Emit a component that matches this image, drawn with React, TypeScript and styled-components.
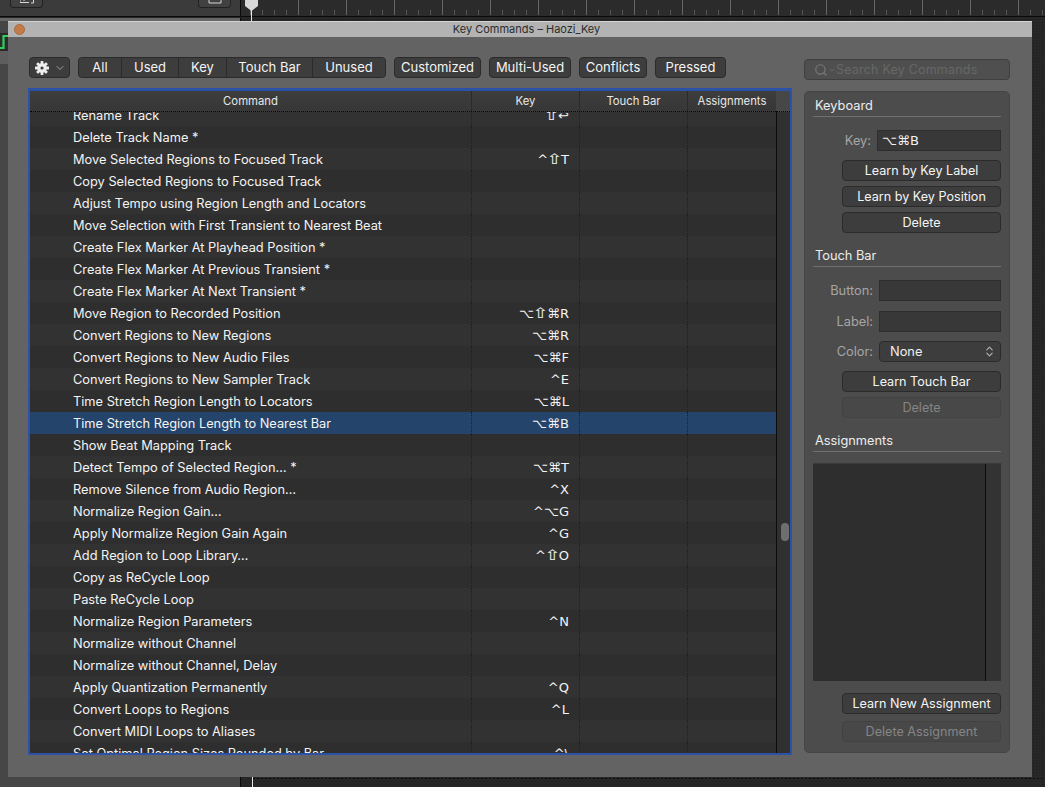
import React from 'react';
import styled, {createGlobalStyle} from 'styled-components';
import {ChevronDown, ChevronsUpDown, Search} from 'lucide-react';

interface ICommandRow {
    label: string;
    shortcut?: string;
    selected?: boolean;
}

const COMMANDS: ICommandRow[] = [
    {label: 'Rename Track', shortcut: '⇧↩'},
    {label: 'Delete Track Name *'},
    {label: 'Move Selected Regions to Focused Track', shortcut: '^⇧T'},
    {label: 'Copy Selected Regions to Focused Track'},
    {label: 'Adjust Tempo using Region Length and Locators'},
    {label: 'Move Selection with First Transient to Nearest Beat'},
    {label: 'Create Flex Marker At Playhead Position *'},
    {label: 'Create Flex Marker At Previous Transient *'},
    {label: 'Create Flex Marker At Next Transient *'},
    {label: 'Move Region to Recorded Position', shortcut: '⌥⇧⌘R'},
    {label: 'Convert Regions to New Regions', shortcut: '⌥⌘R'},
    {label: 'Convert Regions to New Audio Files', shortcut: '⌥⌘F'},
    {label: 'Convert Regions to New Sampler Track', shortcut: '^E'},
    {label: 'Time Stretch Region Length to Locators', shortcut: '⌥⌘L'},
    {label: 'Time Stretch Region Length to Nearest Bar', shortcut: '⌥⌘B', selected: true},
    {label: 'Show Beat Mapping Track'},
    {label: 'Detect Tempo of Selected Region… *', shortcut: '⌥⌘T'},
    {label: 'Remove Silence from Audio Region…', shortcut: '^X'},
    {label: 'Normalize Region Gain…', shortcut: '^⌥G'},
    {label: 'Apply Normalize Region Gain Again', shortcut: '^G'},
    {label: 'Add Region to Loop Library…', shortcut: '^⇧O'},
    {label: 'Copy as ReCycle Loop'},
    {label: 'Paste ReCycle Loop'},
    {label: 'Normalize Region Parameters', shortcut: '^N'},
    {label: 'Normalize without Channel'},
    {label: 'Normalize without Channel, Delay'},
    {label: 'Apply Quantization Permanently', shortcut: '^Q'},
    {label: 'Convert Loops to Regions', shortcut: '^L'},
    {label: 'Convert MIDI Loops to Aliases'},
    {label: 'Set Optimal Region Sizes Rounded by Bar', shortcut: '^\\'},
];

const SEGMENTS = [
    {label: 'All', width: 42},
    {label: 'Used', width: 57},
    {label: 'Key', width: 48},
    {label: 'Touch Bar', width: 86},
    {label: 'Unused', width: 73},
];

const FILTERS = [
    {label: 'Customized', width: 87},
    {label: 'Multi-Used', width: 82},
    {label: 'Conflicts', width: 68},
    {label: 'Pressed', width: 71},
];

const GlobalStyle = createGlobalStyle`
    html, body {
        margin: 0;
        background: #262626;
    }
    * {
        box-sizing: border-box;
    }
    body {
        font-family: Inter, "Noto Sans", sans-serif;
    }
`;

const Desktop = styled.div`
    position: relative;
    width: 1045px;
    height: 787px;
    overflow: hidden;
    background-color: #272727;
    background-image: radial-gradient(#1f1f1f 0.7px, transparent 0.8px);
    background-size: 3px 3px;
`;

const HostTop = styled.div`
    display: grid;
    grid-template-columns: 241px 1fr;
    height: 17px;
    border-bottom: 1px solid #0a0a0a;
`;

const HostToolbar = styled.div`
    display: flex;
    justify-content: space-between;
    padding: 0 9px 0 10px;
    background: #3b3b3b;
    border-right: 1px solid #0a0a0a;
`;

const HostButton = styled.div`
    width: 33px;
    height: 8px;
    display: flex;
    justify-content: center;
    background: #414141;
    border: 1px solid #222;
    border-top: 0;
    border-radius: 0 0 4px 4px;
`;

const Ruler = styled.div`
    position: relative;
    background-color: #2b2b2b;
    background-image:
        repeating-linear-gradient(90deg, transparent 0 9px, #666 9px 10px, transparent 10px 48px),
        repeating-linear-gradient(90deg, transparent 0 9px, #555 9px 10px, transparent 10px 12px);
    background-size: 100% 15px, 100% 5px;
    background-position: 0 0, 0 10px;
    background-repeat: no-repeat;
`;

const Playhead = styled.div`
    position: absolute;
    left: 4px;
    top: 0;
    width: 13px;
    height: 11px;
    background: #d8d8d8;
    clip-path: polygon(0 0, 100% 0, 100% 55%, 50% 100%, 0 55%);
`;

const PlayheadLine = styled.div`
    position: absolute;
    left: 10px;
    top: 10px;
    width: 1px;
    height: 11px;
    background: #e8e8e8;
`;

const HostGutter = styled.div`
    position: absolute;
    left: 0;
    top: 18px;
    width: 241px;
    height: 769px;
    background: linear-gradient(
        #666 0 3px,
        #454545 3px 15px,
        #2b2b2b 15px 33px,
        #5e5e5e 33px 46px,
        #464646 46px
    );
    border-right: 1px solid #0a0a0a;
`;

const HostTrackMark = styled.svg`
    position: absolute;
    left: 0;
    top: 33px;
`;

const HostFoot = styled.div`
    position: absolute;
    left: 241px;
    top: 777px;
    width: 804px;
    height: 10px;
    background-image: radial-gradient(#0c0c0c 0.8px, transparent 0.9px);
    background-size: 4px 3px;
    background-position: 11px 0;
    background-repeat: repeat-x;
`;

const HostPlayLine = styled.div`
    width: 12px;
    height: 10px;
    background: #262626;
    border-right: 1px solid #e8e8e8;
`;

const Window = styled.div`
    position: absolute;
    left: 8px;
    top: 21px;
    width: 1024px;
    height: 756px;
    display: flex;
    flex-direction: column;
    background: #636363;
`;

const TitleBar = styled.div`
    position: relative;
    height: 16px;
    flex: none;
    padding-left: 13px;
    text-align: center;
    font-size: 11px;
    line-height: 15px;
    color: #2c2c2c;
    background-color: #b3b3b3;
    background-image: radial-gradient(#a8a8a8 0.6px, transparent 0.7px);
    background-size: 2px 2px;
    border-top: 1px solid #d4d4d4;
`;

const CloseDot = styled.span`
    position: absolute;
    left: 6px;
    top: 2px;
    width: 11px;
    height: 11px;
    border-radius: 50%;
    background: #c27c4a;
    border: 1px solid #a96a3d;
`;

const Content = styled.div`
    flex: 1;
    min-height: 0;
    display: grid;
    grid-template-columns: 764px 206px;
    column-gap: 12px;
    grid-template-rows: 21px 1fr;
    padding: 20px 0 22px 20px;
    row-gap: 10px;
`;

const Toolbar = styled.div`
    display: flex;
    gap: 8px;
    margin-left: 1px;
`;

const ChromeButton = styled.div<{$width: number}>`
    width: ${props => props.$width}px;
    height: 21px;
    display: flex;
    align-items: center;
    justify-content: center;
    font-size: 13px;
    line-height: 19px;
    color: #f4f4f4;
    background: #3d3d3d;
    border: 1px solid #2b2b2b;
    border-radius: 4px;
`;

const GearButton = styled(ChromeButton)`
    gap: 5px;
    padding-left: 2px;
    color: #ededed;
    svg + svg {
        color: #a0a0a0;
    }
`;

const SegmentGroup = styled.div`
    display: flex;
    height: 21px;
    background: #3d3d3d;
    border: 1px solid #2b2b2b;
    border-radius: 4px;
`;

const Segment = styled.div<{$width: number}>`
    width: ${props => props.$width}px;
    display: flex;
    align-items: center;
    justify-content: center;
    font-size: 13px;
    line-height: 19px;
    color: #f4f4f4;
    & + & {
        border-left: 1px solid #2b2b2b;
    }
`;

const SearchBox = styled.div`
    height: 21px;
    margin-top: 2px;
    display: flex;
    align-items: center;
    padding-left: 9px;
    font-size: 12.5px;
    letter-spacing: 0.2px;
    color: #676767;
    background: #4f4f4f;
    border: 1px solid #3f3f3f;
    border-radius: 4px;
    svg {
        flex: none;
        color: #787878;
    }
`;

const Table = styled.div`
    position: relative;
    display: grid;
    grid-template-columns: 1fr 14px;
    grid-template-rows: 21px 1fr;
    height: 667px;
    overflow: hidden;
    background: #2f2f2f;
    border: 2px solid #2c52a8;
    border-top-width: 3px;
`;

const TableHeader = styled.div`
    display: grid;
    grid-template-columns: 441px 108px 108px 89px;
    height: 21px;
    background: linear-gradient(#3d3d3d, #373737);
    border-bottom: 1px dotted #050505;
`;

const HeaderCell = styled.div`
    display: flex;
    align-items: center;
    justify-content: center;
    font-size: 11.3px;
    white-space: nowrap;
    color: #e8e8e8;
    & + & {
        border-left: 1px solid #2b2b2b;
    }
`;

const HeaderCorner = styled.div`
    background: #474747;
    border-bottom: 1px dotted #050505;
`;

const RowsViewport = styled.div`
    min-height: 0;
    overflow: hidden;
`;

const RowsList = styled.div`
    margin-top: -8px;
`;

const Row = styled.div<{$selected?: boolean}>`
    display: grid;
    grid-template-columns: 441px 108px 108px 89px;
    height: 22px;
    font-size: 12.8px;
    line-height: 24px;
    color: #f4f4f4;
    background: ${props => (props.$selected ? '#24446b' : '#2e2e2e')};
    &:nth-child(odd) {
        background: ${props => (props.$selected ? '#24446b' : '#323232')};
    }
`;

const CommandCell = styled.div`
    padding-left: 43px;
    white-space: nowrap;
`;

const DataCell = styled.div`
    border-left: 1px dotted #202020;
`;

const KeyCell = styled(DataCell)`
    padding-right: 10px;
    text-align: right;
    white-space: nowrap;
    font-family: "DejaVu Sans", Inter, sans-serif;
    font-size: 13px;
`;

const ShiftGlyph = styled.span`
    display: inline-block;
    margin: 0 1px;
    line-height: 1;
    transform: scale(1.5, 1.1);
`;

const ScrollTrack = styled.div`
    position: relative;
    background: #303030;
    border-left: 1px solid #0c0c0c;
`;

const ScrollThumb = styled.div`
    position: absolute;
    left: 4px;
    top: 411px;
    width: 8px;
    height: 18px;
    border-radius: 4px;
    background: #6e6e6e;
`;

const SidePanel = styled.aside`
    display: flex;
    flex-direction: column;
    height: 662px;
    margin-top: 3px;
    padding: 4px 8px 10px;
    background: #4c4c4c;
    border: 1px solid #454545;
    border-radius: 5px;
`;

const SectionTitle = styled.div`
    height: 21px;
    padding-left: 2px;
    font-size: 12.8px;
    line-height: 20px;
    color: #ececec;
    border-bottom: 1px solid #6f6f6f;
`;

const FieldRow = styled.div<{$field: number; $after: number}>`
    display: grid;
    grid-template-columns: 1fr ${props => props.$field}px;
    column-gap: 6px;
    align-items: center;
    height: 21px;
    margin-bottom: ${props => props.$after}px;
`;

const FieldLabel = styled.div`
    text-align: right;
    font-size: 12.8px;
    color: #a6a6a6;
`;

const FieldInput = styled.div`
    height: 21px;
    padding-left: 4px;
    font-family: "DejaVu Sans", Inter, sans-serif;
    font-size: 13px;
    line-height: 20px;
    color: #f0f0f0;
    background: #383838;
    border: 1px solid #2e2e2e;
`;

const SelectBox = styled.div`
    height: 21px;
    display: flex;
    align-items: center;
    justify-content: space-between;
    padding: 0 4px 0 10px;
    font-size: 12.8px;
    color: #f0f0f0;
    background: #3d3d3d;
    border: 1px solid #2b2b2b;
    border-radius: 4px;
    svg {
        color: #b5b5b5;
    }
`;

const ActionButton = styled.div<{$disabled?: boolean}>`
    flex: none;
    width: 159px;
    height: 21px;
    margin-left: auto;
    display: flex;
    align-items: center;
    justify-content: center;
    font-size: 12.6px;
    color: ${props => (props.$disabled ? '#858585' : '#f4f4f4')};
    background: ${props => (props.$disabled ? '#484848' : '#3d3d3d')};
    border: 1px solid ${props => (props.$disabled ? '#424242' : '#2b2b2b')};
    border-radius: 4px;
`;

const ButtonStack = styled.div<{$gap: number}>`
    display: flex;
    flex-direction: column;
    gap: ${props => props.$gap}px;
`;

const FieldGroup = styled.div`
    padding-top: 13px;
`;

const PanelSection = styled.div`
    margin-top: 13px;
`;

const AssignmentsSection = styled(PanelSection)`
    display: flex;
    flex-direction: column;
    flex: 1;
    min-height: 0;
`;

const AssignmentsList = styled.div`
    display: grid;
    grid-template-columns: 1fr 16px;
    height: 218px;
    margin: 11px 0 12px;
    background: #2e2e2e;
    border-top: 1px solid #3a3a3a;
`;

const AssignmentsScroll = styled.div`
    background: #333;
    border-left: 1px solid #0c0c0c;
`;

const GearIcon = (): JSX.Element => (
    <svg width="14" height="14" viewBox="0 0 14 14">
        <g fill="currentColor">
            {[0, 45, 90, 135, 180, 225, 270, 315].map(angle => (
                <rect key={angle} x="5.6" y="0" width="2.8" height="4" rx="0.5" transform={`rotate(${angle} 7 7)`} />
            ))}
            <path
                fillRule="evenodd"
                d="M7 2.2a4.8 4.8 0 1 1 0 9.6 4.8 4.8 0 0 1 0-9.6zM7 5.4a1.6 1.6 0 1 0 0 3.2 1.6 1.6 0 0 0 0-3.2z"
            />
        </g>
    </svg>
);

const HostStackIcon = (): JSX.Element => (
    <svg width="14" height="4" viewBox="0 0 14 4">
        <path d="M0 0 V2.5 H9 M4 0 V1 M13.5 0 V3 H11" fill="none" stroke="#d8d8d8" strokeWidth="1" />
    </svg>
);

const HostSquareIcon = (): JSX.Element => (
    <svg width="14" height="4" viewBox="0 0 14 4">
        <path d="M1 0 V3 H13 V0" fill="none" stroke="#d8d8d8" strokeWidth="1" />
    </svg>
);

const renderShortcut = (shortcut?: string) =>
    shortcut
        ?.split('')
        .map((char, index) => (char === '⇧' ? <ShiftGlyph key={index}>{char}</ShiftGlyph> : char));

const App = (): JSX.Element => {
    return (
        <Desktop>
            <GlobalStyle />
            <HostGutter />
            <HostTrackMark width="8" height="17" viewBox="0 0 8 17">
                <path d="M0 15 H3.5 V3 H8" fill="none" stroke="#2fd05a" strokeWidth="2.2" />
            </HostTrackMark>
            <HostTop>
                <HostToolbar>
                    <HostButton>
                        <HostStackIcon />
                    </HostButton>
                    <HostButton>
                        <HostSquareIcon />
                    </HostButton>
                </HostToolbar>
                <Ruler>
                    <Playhead />
                    <PlayheadLine />
                </Ruler>
            </HostTop>
            <HostFoot>
                <HostPlayLine />
            </HostFoot>
            <Window>
                <TitleBar>
                    <CloseDot />
                    Key Commands – Haozi_Key
                </TitleBar>
                <Content>
                    <Toolbar>
                        <GearButton $width={41}>
                            <GearIcon />
                            <ChevronDown size={12} />
                        </GearButton>
                        <SegmentGroup>
                            {SEGMENTS.map(segment => (
                                <Segment key={segment.label} $width={segment.width}>
                                    {segment.label}
                                </Segment>
                            ))}
                        </SegmentGroup>
                        {FILTERS.map(filter => (
                            <ChromeButton key={filter.label} $width={filter.width}>
                                {filter.label}
                            </ChromeButton>
                        ))}
                    </Toolbar>
                    <SearchBox>
                        <Search size={14} />
                        <ChevronDown size={8} />
                        Search Key Commands
                    </SearchBox>
                    <Table>
                        <TableHeader>
                            <HeaderCell>Command</HeaderCell>
                            <HeaderCell>Key</HeaderCell>
                            <HeaderCell>Touch Bar</HeaderCell>
                            <HeaderCell>Assignments</HeaderCell>
                        </TableHeader>
                        <HeaderCorner />
                        <RowsViewport>
                            <RowsList>
                                {COMMANDS.map(command => (
                                    <Row key={command.label} $selected={command.selected}>
                                        <CommandCell>{command.label}</CommandCell>
                                        <KeyCell>{renderShortcut(command.shortcut)}</KeyCell>
                                        <DataCell />
                                        <DataCell />
                                    </Row>
                                ))}
                            </RowsList>
                        </RowsViewport>
                        <ScrollTrack>
                            <ScrollThumb />
                        </ScrollTrack>
                    </Table>
                    <SidePanel>
                        <SectionTitle>Keyboard</SectionTitle>
                        <FieldGroup>
                            <FieldRow $field={124} $after={9}>
                                <FieldLabel>Key:</FieldLabel>
                                <FieldInput>⌥⌘B</FieldInput>
                            </FieldRow>
                            <ButtonStack $gap={5}>
                                <ActionButton>Learn by Key Label</ActionButton>
                                <ActionButton>Learn by Key Position</ActionButton>
                                <ActionButton>Delete</ActionButton>
                            </ButtonStack>
                        </FieldGroup>
                        <PanelSection>
                            <SectionTitle>Touch Bar</SectionTitle>
                            <FieldGroup>
                                <FieldRow $field={122} $after={10}>
                                    <FieldLabel>Button:</FieldLabel>
                                    <FieldInput />
                                </FieldRow>
                                <FieldRow $field={122} $after={9}>
                                    <FieldLabel>Label:</FieldLabel>
                                    <FieldInput />
                                </FieldRow>
                                <FieldRow $field={122} $after={9}>
                                    <FieldLabel>Color:</FieldLabel>
                                    <SelectBox>
                                        None
                                        <ChevronsUpDown size={13} />
                                    </SelectBox>
                                </FieldRow>
                                <ButtonStack $gap={5}>
                                    <ActionButton>Learn Touch Bar</ActionButton>
                                    <ActionButton $disabled>Delete</ActionButton>
                                </ButtonStack>
                            </FieldGroup>
                        </PanelSection>
                        <AssignmentsSection>
                            <SectionTitle>Assignments</SectionTitle>
                            <AssignmentsList>
                                <div />
                                <AssignmentsScroll />
                            </AssignmentsList>
                            <ButtonStack $gap={7}>
                                <ActionButton>Learn New Assignment</ActionButton>
                                <ActionButton $disabled>Delete Assignment</ActionButton>
                            </ButtonStack>
                        </AssignmentsSection>
                    </SidePanel>
                </Content>
            </Window>
        </Desktop>
    );
};

export default App;
